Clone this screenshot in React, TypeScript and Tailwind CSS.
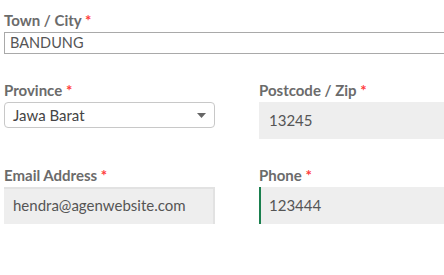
import React from 'react';

const Label = ({ text }: { text: string }) => (
  <label className="block text-[15px] font-bold leading-[20px] text-[#6b6b6b]">
    {text} <span className="text-[#ff3b3b]">*</span>
  </label>
);

export default function App() {
  return (
    <div className="min-h-[275px] overflow-hidden bg-white pl-[4px] pt-[10px] font-['Lato',sans-serif]">
      {/* Town / City */}
      <div>
        <Label text="Town / City" />
        <div className="mt-[2px] h-[22px] w-[460px] border border-[#a9a9a9] pl-[5px] text-[14.5px] leading-[20px] text-[#555]">
          BANDUNG
        </div>
      </div>

      <div className="mt-[26px] flex gap-[44px]">
        {/* Province */}
        <div className="w-[211px] shrink-0">
          <Label text="Province" />
          <div className="mt-[2px] flex h-[26px] items-center justify-between rounded-[4px] border border-[#c8c8c8] pl-[8px] pr-[8px] text-[15px] text-[#444]">
            <span>Jawa Barat</span>
            <svg width="9" height="5" viewBox="0 0 9 5">
              <path d="M0 0 L9 0 L4.5 5 Z" fill="#666" />
            </svg>
          </div>
        </div>
        {/* Postcode */}
        <div className="w-[200px] shrink-0">
          <Label text="Postcode / Zip" />
          <div className="mt-[2px] flex h-[37px] items-center bg-[#eeeeee] pl-[10px] text-[15px] text-[#555]">
            13245
          </div>
        </div>
      </div>

      <div className="mt-[26px] flex gap-[44px]">
        {/* Email */}
        <div className="w-[211px] shrink-0">
          <Label text="Email Address" />
          <div className="mt-[2px] flex h-[37px] items-center bg-[#eeeeee] pl-[9px] text-[15px] text-[#555] shadow-[inset_0_2px_0_#e2e2e2,inset_-2px_0_0_#e2e2e2]">
            hendra@agenwebsite.com
          </div>
        </div>
        {/* Phone */}
        <div className="w-[200px] shrink-0">
          <Label text="Phone" />
          <div className="mt-[2px] flex h-[37px] items-center border-l-2 border-[#1a7f4e] bg-[#eeeeee] pl-[8px] text-[15px] text-[#555]">
            123444
          </div>
        </div>
      </div>
    </div>
  );
}
